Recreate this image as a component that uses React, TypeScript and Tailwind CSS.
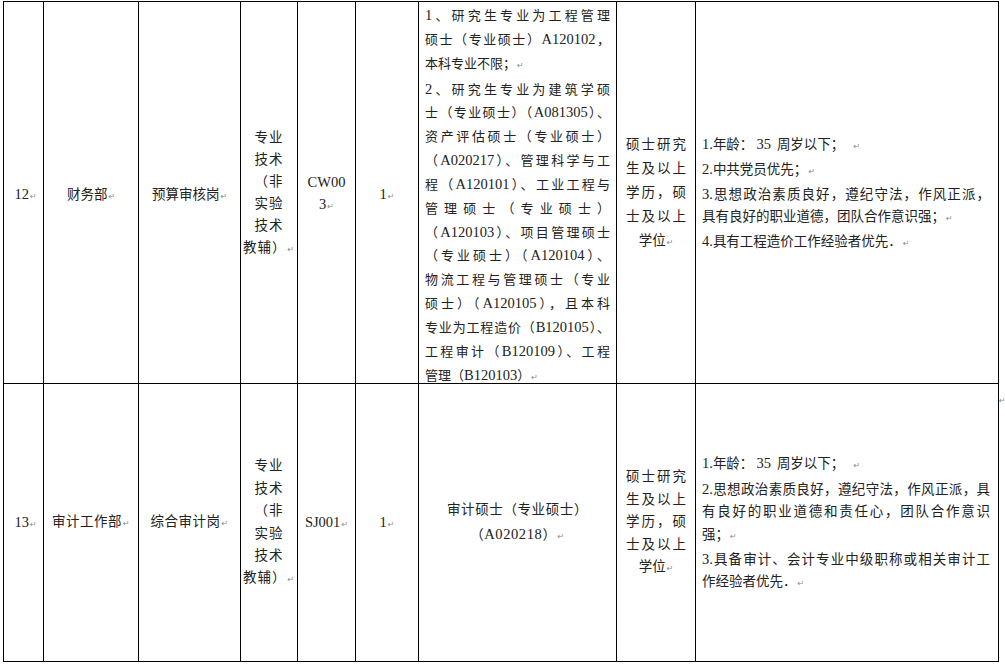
import React from "react";

const R = () => (
  <span className="ml-[1px] font-['DejaVu_Sans'] text-[8px] text-[#8a8a8a] align-baseline">↵</span>
);

const t = (s: string) =>
  s.split(/([A-Za-z0-9.]+)/).map((p, i) =>
    /^[A-Za-z0-9.]+$/.test(p) ? (
      <span key={i} className="text-[14.5px]">
        {p}
      </span>
    ) : (
      <React.Fragment key={i}>{p}</React.Fragment>
    )
  );

const J = ({ s }: { s: string }) => (
  <div className="whitespace-nowrap text-justify [text-align-last:justify]">{t(s)}</div>
);

const L = ({ s, r = true }: { s: string; r?: boolean }) => (
  <div className="whitespace-nowrap">
    {t(s)}
    {r && <R />}
  </div>
);

const cell = "border-r border-b border-black flex items-center justify-center text-center";

function Stack({ lines, lead }: { lines: React.ReactNode[]; lead: string }) {
  return (
    <div className={lead}>
      {lines.map((l, i) => (
        <div key={i} className="whitespace-nowrap">
          {l}
        </div>
      ))}
    </div>
  );
}

export default function App() {
  return (
    <div className="w-[1005px] h-[664px] bg-white pl-[3px] pt-[1px] text-[#222] font-['Liberation_Serif','Noto_Sans_CJK_SC',serif] text-[13.5px]">
      <div className="flex">
        <div className="grid grid-cols-[40px_95px_102px_57px_58px_63px_198px_79px_303px] grid-rows-[382px_278px] border-l border-t border-black">
          {/* Row 12 */}
          <div className={cell + " pt-[5px] pl-[4px]"}>
            <span>
              {t("12")}
              <R />
            </span>
          </div>
          <div className={cell + " pt-[5px]"}>
            <span>
              财务部
              <R />
            </span>
          </div>
          <div className={cell + " pt-[5px]"}>
            <span>
              预算审核岗
              <R />
            </span>
          </div>
          <div className={cell + " pt-[3px]"}>
            <Stack
              lead="leading-[22px] tracking-[1px]"
              lines={[
                "专业",
                "技术",
                "（非",
                "实验",
                "技术",
                <>
                  教辅）
                  <R />
                </>,
              ]}
            />
          </div>
          <div className={cell + " pt-[3px]"}>
            <Stack
              lead="leading-[22px] text-[14.5px]"
              lines={[
                "CW00",
                <>
                  3
                  <R />
                </>,
              ]}
            />
          </div>
          <div className={cell + " pt-[5px]"}>
            <span>
              {t("1")}
              <R />
            </span>
          </div>
          <div className="border-r border-b border-black pl-[6px] pr-[6px] pt-[2px] text-[13px] leading-[23.85px]">
            <J s="1、研究生专业为工程管理" />
            <J s="硕士（专业硕士）A120102，" />
            <L s="本科专业不限；" />
            <J s="2、研究生专业为建筑学硕" />
            <J s="士（专业硕士）（A081305）、" />
            <J s="资产评估硕士（专业硕士）" />
            <J s="（A020217）、管理科学与工" />
            <J s="程（A120101）、工业工程与" />
            <J s="管理硕士（专业硕士）" />
            <J s="（A120103）、项目管理硕士" />
            <J s="（专业硕士）（A120104）、" />
            <J s="物流工程与管理硕士（专业" />
            <J s="硕士）（A120105），且本科" />
            <J s="专业为工程造价（B120105）、" />
            <J s="工程审计（B120109）、工程" />
            <L s="管理（B120103）" />
          </div>
          <div className={cell + " pt-[2px]"}>
            <div className="w-[60px] leading-[24px]">
              <J s="硕士研究" />
              <J s="生及以上" />
              <J s="学历，硕" />
              <J s="士及以上" />
              <div className="whitespace-nowrap text-center">
                学位
                <R />
              </div>
            </div>
          </div>
          <div className="border-r border-b border-black flex flex-col justify-center pl-[6px] pr-[8px] pt-[3px] leading-[22px]">
            <div className="whitespace-nowrap">
              {t("1.")}年龄：<span className="ml-[3px] text-[14.5px]">35</span>
              <span className="ml-[6px]">周岁以下；</span>
              <span className="ml-[8px]">
                <R />
              </span>
            </div>
            <L s="2.中共党员优先；" />
            <J s="3.思想政治素质良好，遵纪守法，作风正派，" />
            <L s="具有良好的职业道德，团队合作意识强；" />
            <L s="4.具有工程造价工作经验者优先．" />
          </div>

          {/* Row 13 */}
          <div className={cell + " pl-[4px]"}>
            <span>
              {t("13")}
              <R />
            </span>
          </div>
          <div className={cell}>
            <span className="tracking-[0.5px]">
              审计工作部
              <R />
            </span>
          </div>
          <div className={cell}>
            <span className="tracking-[0.5px]">
              综合审计岗
              <R />
            </span>
          </div>
          <div className={cell + " pt-[2px]"}>
            <Stack
              lead="leading-[22.4px] tracking-[1px]"
              lines={[
                "专业",
                "技术",
                "（非",
                "实验",
                "技术",
                <>
                  教辅）
                  <R />
                </>,
              ]}
            />
          </div>
          <div className={cell}>
            <span className="text-[14.5px]">
              SJ001
              <R />
            </span>
          </div>
          <div className={cell}>
            <span>
              {t("1")}
              <R />
            </span>
          </div>
          <div className={cell + " pt-[1px]"}>
            <Stack
              lead="leading-[24px] tracking-[0.6px]"
              lines={[
                "审计硕士（专业硕士）",
                <>
                  （{t("A020218")}）
                  <R />
                </>,
              ]}
            />
          </div>
          <div className={cell + " pt-[2px]"}>
            <div className="w-[60px] leading-[22.5px]">
              <J s="硕士研究" />
              <J s="生及以上" />
              <J s="学历，硕" />
              <J s="士及以上" />
              <div className="whitespace-nowrap text-center">
                学位
                <R />
              </div>
            </div>
          </div>
          <div className="border-r border-b border-black flex flex-col justify-center pl-[6px] pr-[8px] pt-[3px] leading-[22.4px]">
            <div className="whitespace-nowrap">
              {t("1.")}年龄：<span className="ml-[3px] text-[14.5px]">35</span>
              <span className="ml-[6px]">周岁以下；</span>
              <span className="ml-[8px]">
                <R />
              </span>
            </div>
            <J s="2.思想政治素质良好，遵纪守法，作风正派，具" />
            <J s="有良好的职业道德和责任心，团队合作意识" />
            <L s="强；" />
            <J s="3.具备审计、会计专业中级职称或相关审计工" />
            <L s="作经验者优先．" />
          </div>
        </div>
        <div className="pt-[388px] -ml-[1px]">
          <R />
        </div>
      </div>
    </div>
  );
}
